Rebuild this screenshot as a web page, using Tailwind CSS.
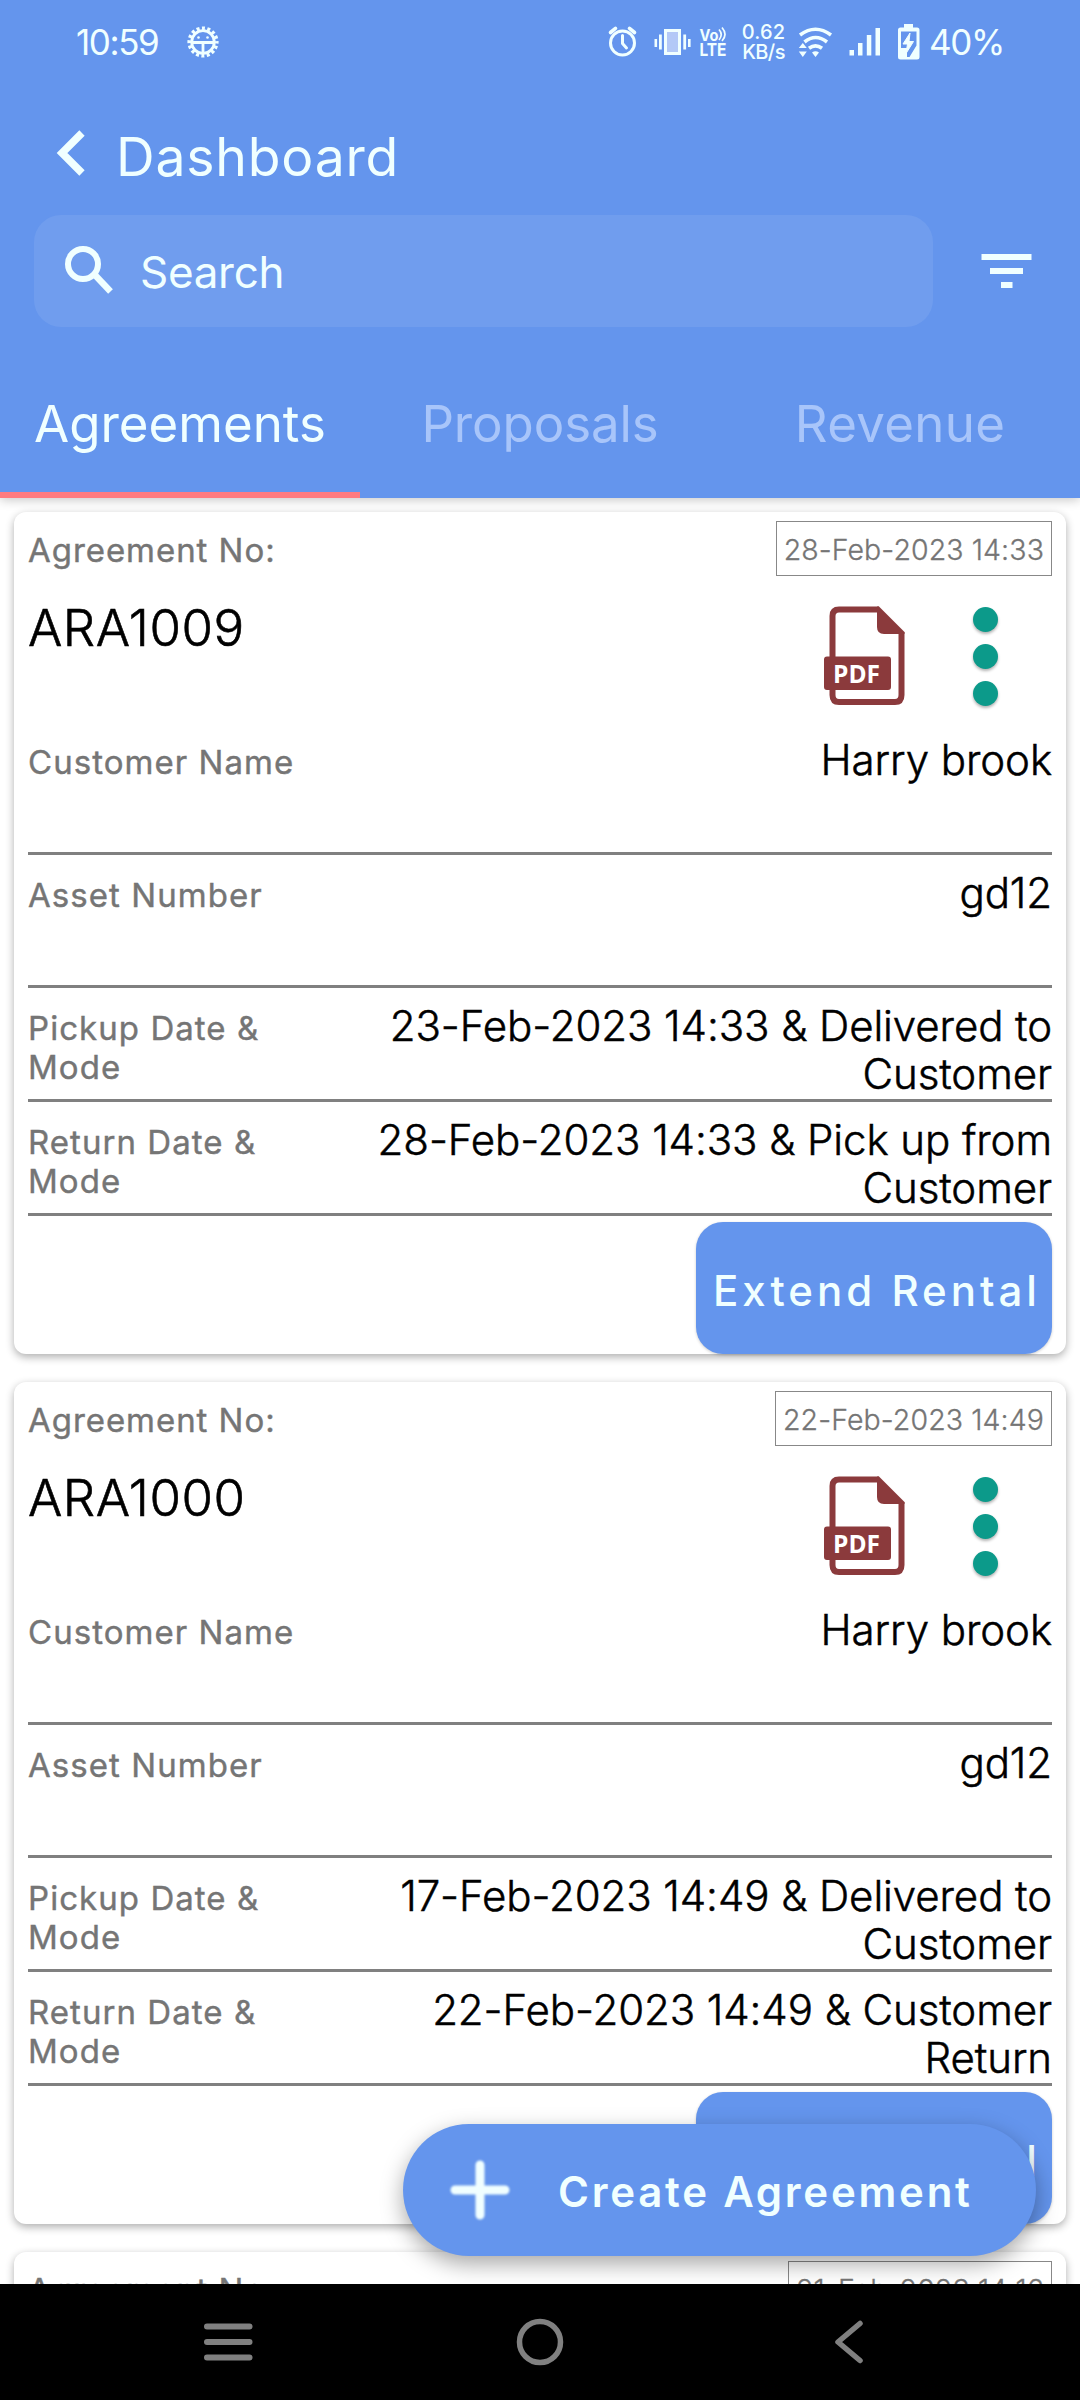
<!DOCTYPE html>
<html lang="en">
<head>
<meta charset="utf-8">
<meta name="viewport" content="width=device-width, initial-scale=1">
<title>Dashboard</title>
<script src="https://cdn.jsdelivr.net/npm/@tailwindcss/browser@4"></script>
</head>
<body class="bg-white">
<div class="relative flex flex-col w-[1080px] h-[2400px] overflow-hidden bg-white font-['Inter','Roboto',sans-serif] text-black whitespace-nowrap">

  <header class="relative z-10 shrink-0 flex flex-col h-[498px] bg-[#6495ed] text-[#f0ffff] shadow-[0_2px_10px_rgba(0,0,0,0.22)]">
    <!-- status bar -->
    <div class="flex items-center h-[84px] pl-[76px]">
      <span class="w-[100px] text-[35px] leading-[84px] tracking-[-1.4px]">10:59</span>
      <svg class="ml-[10px]" width="34" height="34" viewBox="-17 -17 34 34" fill="none" stroke="#f0ffff">
        <circle r="11.3" stroke-width="2.8"/>
        <circle r="13.8" stroke-width="3.6" stroke-dasharray="3 2.42" stroke-dashoffset="1.5"/>
        <path d="M-11 0.5H11M0 0.5V12" stroke-width="2.8"/>
        <circle cx="-4.5" cy="-4.5" r="1.3" fill="#f0ffff" stroke="none"/><circle cx="4.5" cy="-4.5" r="1.3" fill="#f0ffff" stroke="none"/>
      </svg>
      <svg class="ml-[385px]" width="34" height="34" viewBox="606 25 34 34" fill="none" stroke="#f0ffff" stroke-width="3" stroke-linecap="round" stroke-linejoin="round">
        <circle cx="623.5" cy="43" r="12"/><path d="M623.5 35.5V43.5L627.5 48"/><path d="M611.5 32.5L616.5 28.3M635.5 32.5L630.5 28.3" stroke-width="3.6"/>
      </svg>
      <svg class="ml-[14px]" width="40" height="34" viewBox="654 24 40 34" fill="#f0ffff">
        <rect x="666.5" y="29.5" width="14" height="23" fill="#b3c9f7" stroke="#f0ffff" stroke-width="3"/>
        <rect x="655.5" y="38" width="2.6" height="8"/><rect x="660" y="33.500" width="2.8" height="15"/>
        <rect x="684.300" y="33.500" width="2.8" height="15"/><rect x="689" y="38" width="2.600" height="8"/>
      </svg>
      <svg class="ml-[6px]" width="30" height="34" viewBox="700 25 30 34" fill="#f0ffff" font-family="Inter" font-weight="700">
        <text x="700.5" y="40.5" font-size="16" textLength="19" lengthAdjust="spacingAndGlyphs">Vo</text>
        <text x="700.5" y="55.500" font-size="17.500" textLength="27" lengthAdjust="spacingAndGlyphs">LTE</text>
        <path d="M720 29.500q4.500 5 0 10.500M723 27.500q6 7 0 13.500" fill="none" stroke="#f0ffff" stroke-width="1.700"/>
      </svg>
      <div class="ml-[12px] w-[45px] flex flex-col items-center text-[20px] leading-[20px] tracking-[0.2px] font-medium"><span>0.62</span><span class="tracking-[-0.6px]">KB/s</span></div>
      <svg class="ml-[12px]" width="36" height="34" viewBox="799 24 36 34" fill="none" stroke="#f0ffff" stroke-width="3.600">
        <path d="M801 34Q816.500 22.500 832 34M805.500 41Q816.500 32 828 41"/><path d="M810 47.300Q816.500 42.500 823 47.300"/>
        <path d="M813 51.500q3.500-2.500 7 0l-3.500 4.500zM803.800 42l4 5h-8zM803.800 56l4-5.500h-8z" fill="#f0ffff" stroke="none"/>
      </svg>
      <svg class="ml-[14px]" width="34" height="34" viewBox="849 24 34 34" fill="#f0ffff">
        <rect x="850.500" y="49" width="4.500" height="5.500"/><rect x="859" y="42" width="4.500" height="12.500"/><rect x="867.800" y="34" width="4.500" height="20.500"/><rect x="876.500" y="27" width="4.500" height="27.500"/>
      </svg>
      <svg class="ml-[14px]" width="25" height="38" viewBox="897 23 25 38">
        <path fill="#f0ffff" d="M905 24h9v3.500h4q2.500 0 2.500 2.500v27q0 2.500-2.500 2.500h-16.500q-2.500 0-2.500-2.500v-27q0-2.500 2.500-2.500h3.500z"/>
        <path fill="#6495ed" d="M902 31.500h15.500v14l-7 11.500h-2.500v-9h-6z"/>
        <path fill="#f0ffff" stroke="#f0ffff" stroke-width="1" d="M911 33l-7 11h4.500l-1.500 9.500 7.500-12h-4.500z"/>
      </svg>
      <span class="ml-[8px] text-[35px] leading-[84px] tracking-[-1.4px]">40%</span>
    </div>
    <!-- title -->
    <div class="flex items-center h-[131px] pl-[56px]">
      <svg class="mt-[6px]" width="30" height="46" viewBox="0 0 30 46" fill="none" stroke="#f0ffff" stroke-width="7.5"><path d="M26 3L6 23L26 43"/></svg>
      <h1 class="ml-[30px] mt-[14px] text-[53.5px] leading-[64px] tracking-[0.8px]">Dashboard</h1>
    </div>
    <!-- search -->
    <div class="flex items-center h-[112px] pl-[34px]">
      <div class="flex items-center w-[899px] h-[112px] pl-[31px] rounded-[27px] bg-[#709dee]">
        <svg width="50" height="50" viewBox="0 0 50 50" fill="none" stroke="#f0ffff" stroke-width="6"><circle cx="18" cy="18" r="15"/><path d="M29.500 28.500L45.500 45.500" stroke-width="6.500"/></svg>
        <span class="ml-[25px] mt-[2px] text-[44px] leading-[56px] tracking-[-0.3px]">Search</span>
      </div>
      <svg class="ml-[48px]" width="51" height="34" viewBox="0 0 51 34" fill="#f0ffff"><path d="M0.500 0h50v6h-50zM9 14h33v6h-33zM20 28h11.500v6h-11.500z"/></svg>
    </div>
    <!-- tabs -->
    <nav class="grid grid-cols-3 h-[171px] text-[51px] text-[#a8c5fa]">
      <div class="relative flex items-center justify-center pt-[24px] text-[#f0ffff]">Agreements<i class="absolute left-0 bottom-0 w-full h-[6px] bg-[#ff7b80]"></i></div>
      <div class="flex items-center justify-center pt-[24px] tracking-[-0.1px]">Proposals</div>
      <div class="flex items-center justify-center pt-[24px] tracking-[0.3px]">Revenue</div>
    </nav>
  </header>

  <main id="list" class="flex-1 min-h-0 overflow-hidden flex flex-col gap-[28px] px-[14px] pt-[14px]"></main>

  <!-- floating action button -->
  <button class="absolute z-20 left-[403px] top-[2124px] flex items-center w-[633px] h-[132px] rounded-full bg-[#6495ed] text-[#f0ffff] shadow-[0_8px_22px_rgba(0,0,0,0.35)]">
    <svg class="ml-[46px] blur-[1px]" width="62" height="62" viewBox="0 0 62 62" stroke="#f0ffff" stroke-width="9" stroke-linecap="round"><path d="M31 6V56M6 31H56"/></svg>
    <span class="ml-[47px] mt-[4px] text-[42px] leading-[50px] font-semibold tracking-[2.75px]">Create Agreement</span>
  </button>

  <!-- system navigation -->
  <footer class="relative z-30 shrink-0 h-[116px] bg-black flex items-center">
    <svg class="ml-[204px]" width="49" height="40" viewBox="0 0 49 40" fill="#808080"><rect y="1.500" width="48.500" height="6" rx="3"/><rect y="17" width="48.500" height="6" rx="3"/><rect y="32.500" width="48.500" height="6" rx="3"/></svg>
    <svg class="ml-[263px]" width="48" height="48" viewBox="0 0 48 48" fill="none" stroke="#808080" stroke-width="5.500"><circle cx="24" cy="24" r="20.500"/></svg>
    <svg class="ml-[269px]" width="32" height="44" viewBox="0 0 32 44" fill="none" stroke="#808080" stroke-width="5.500" stroke-linecap="round" stroke-linejoin="round"><path d="M27 3.500L5 22L27 40.500"/></svg>
  </footer>
</div>

<script>
const agreements = [
  { no: 'ARA1009', date: '28-Feb-2023 14:33', pickup: '23-Feb-2023 14:33 &amp; Delivered to<br>Customer', ret: '28-Feb-2023 14:33 &amp; Pick up from<br>Customer' },
  { no: 'ARA1000', date: '22-Feb-2023 14:49', pickup: '17-Feb-2023 14:49 &amp; Delivered to<br>Customer', ret: '22-Feb-2023 14:49 &amp; Customer<br>Return' },
  { no: 'ARA0999', date: '21-Feb-2023 14:16', pickup: '', ret: '' },
];
const row = (label, value, height) => `
  <div class="flex justify-between border-b-[3px] border-[#808080] ${height}">
    <div class="pt-[21px] text-[33px] leading-[39px] tracking-[1.05px] text-[#757575] [-webkit-text-stroke:0.4px_#757575]">${label}</div>
    <div class="pt-[14px] text-[42px] leading-[48px] tracking-[-0.08px] text-right font-light [-webkit-text-stroke:0.5px_#000]">${value}</div>
  </div>`;
const card = a => `
  <article class="shrink-0 h-[842px] px-[14px] rounded-[12px] bg-white shadow-[0_3px_9px_rgba(0,0,0,0.32)]">
    <div class="flex justify-between pt-[9px] h-[70px]">
      <div class="text-[33px] leading-[58px] tracking-[0.95px] text-[#757575] [-webkit-text-stroke:0.4px_#757575]">Agreement No:</div>
      <div class="h-[55px] px-[7px] border border-[#888] text-[28.5px] leading-[56px] tracking-[0.1px] text-[#757575] font-light [-webkit-text-stroke:0.3px_#757575]">${a.date}</div>
    </div>
    <div class="flex items-start h-[140px]">
      <div class="mt-[16px] text-[51px] leading-[60px] tracking-[0.5px] font-light [-webkit-text-stroke:0.6px_#000]">${a.no}</div>
      <svg class="ml-auto mt-[24px]" width="81" height="100" viewBox="0 0 81 100">
        <path fill="none" stroke="#8b3a3c" stroke-width="6" stroke-linejoin="round" d="M55 3.500H15Q8.500 3.500 8.500 10V89Q8.500 96 15 96H71Q77.500 96 77.500 89V26"/>
        <path fill="#8b3a3c" d="M55 .5L80.500 26V28H60Q53 28 53 21V.5zM3 50.500H64Q67 50.500 67 53.500V81Q67 84 64 84H3Q0 84 0 81V53.500Q0 50.500 3 50.500z"/>
        <text x="9" y="76.500" fill="#fff" font-family="Open Sans" font-weight="700" font-size="25" textLength="47" lengthAdjust="spacingAndGlyphs">PDF</text>
      </svg>
      <div class="ml-[68px] mr-[54px] mt-[25px] flex flex-col gap-[12px]">
        <i class="size-[25px] rounded-full bg-[#0c9a8a] shadow-[0_2px_3px_rgba(0,0,0,0.3)]"></i>
        <i class="size-[25px] rounded-full bg-[#0c9a8a] shadow-[0_2px_3px_rgba(0,0,0,0.3)]"></i>
        <i class="size-[25px] rounded-full bg-[#0c9a8a] shadow-[0_2px_3px_rgba(0,0,0,0.3)]"></i>
      </div>
    </div>
    ${row('Customer Name', 'Harry brook', 'h-[133px]')}
    ${row('Asset Number', 'gd12', 'h-[133px]')}
    ${row('Pickup Date &amp;<br>Mode', a.pickup, 'h-[114px]')}
    ${row('Return Date &amp;<br>Mode', a.ret, 'h-[114px]')}
    <button class="block ml-auto mt-[6px] w-[356px] h-[132px] pl-[17px] pt-[5px] rounded-[27px] bg-[#6495ed] text-left text-[#f0ffff] text-[42px] leading-[50px] font-medium tracking-[4px] shadow-[0_1px_3px_rgba(0,0,0,0.2)]">Extend Rental</button>
  </article>`;
document.getElementById('list').innerHTML = agreements.map(card).join('');
</script>
</body>
</html>
